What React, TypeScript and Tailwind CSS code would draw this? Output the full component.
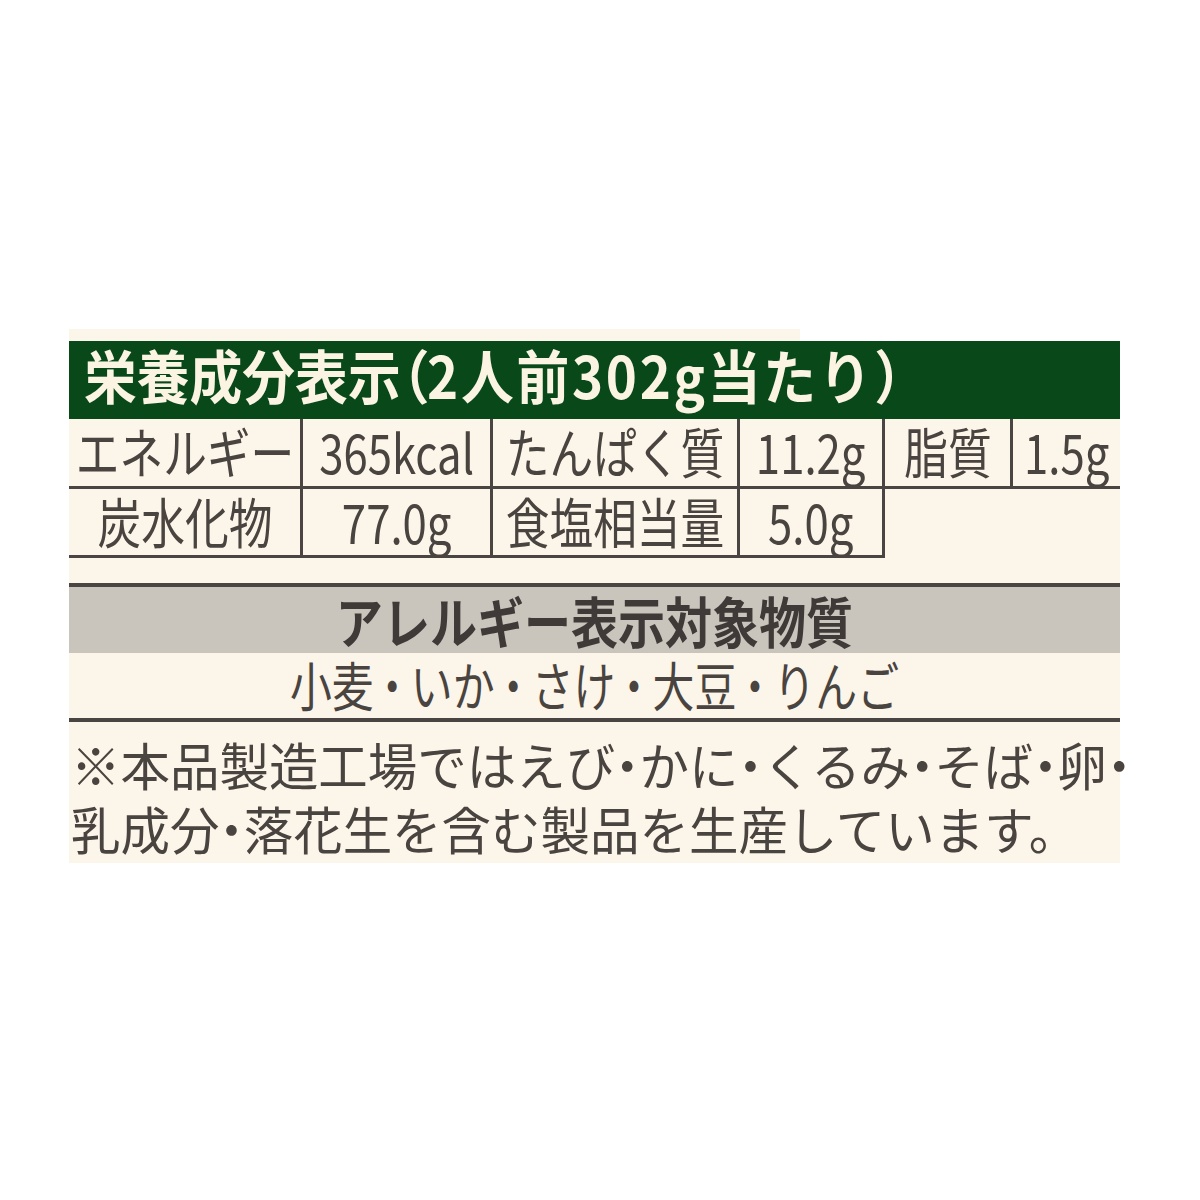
const line = "border-[#4a4542]";

type Cell = { text: string; w: string; last?: boolean };

const row1: Cell[] = [
  { text: "エネルギー", w: "w-[234px]" },
  { text: "365kcal", w: "w-[190px]" },
  { text: "たんぱく質", w: "w-[247px]" },
  { text: "11.2g", w: "w-[145px]" },
  { text: "脂質", w: "w-[128px]" },
  { text: "1.5g", w: "w-[107px]", last: true },
];

const row2: Cell[] = [
  { text: "炭水化物", w: "w-[234px]" },
  { text: "77.0g", w: "w-[190px]" },
  { text: "食塩相当量", w: "w-[247px]" },
  { text: "5.0g", w: "w-[145px]" },
];

const NutriCell = ({ cell, h }: { cell: Cell; h: string }) => (
  <div
    className={`${cell.w} ${h} ${cell.last ? "" : "border-r-[3px]"} ${line} flex justify-center pt-[5px] whitespace-nowrap`}
  >
    <span className="inline-block scale-x-[0.81] text-[54px] leading-[54px] text-[#4a4440]">
      {cell.text}
    </span>
  </div>
);

const Dot = ({ m }: { m: string }) => <span className={m}>・</span>;

export default function App() {
  return (
    <div className="min-h-[1200px] bg-white pt-[329px] pl-[69px] font-['Noto_Sans_CJK_JP','Noto_Sans',sans-serif]">
      <div className="h-[12px] w-[731px] bg-[#fcf5ea]" />
      <div className="w-[1051px] bg-[#fcf5ea]">
        {/* 栄養成分 header */}
        <div className="h-[78px] bg-[#084819] pl-[15px] pt-[4px]">
          <span className="inline-block origin-left scale-x-[0.91] whitespace-nowrap text-[58px] leading-[58px] font-bold text-[#fcf4e3]">
            栄養成分表示<span className="[font-feature-settings:'palt']">（</span>
            <span className="tracking-[3px]">2人前302g当たり）</span>
          </span>
        </div>

        <div className={`flex border-b-[3px] ${line}`}>
          {row1.map((c) => (
            <NutriCell key={c.text} cell={c} h="h-[67px]" />
          ))}
        </div>
        <div className={`flex w-[816px] border-b-[3px] ${line}`}>
          {row2.map((c) => (
            <NutriCell key={c.text} cell={c} h="h-[66px]" />
          ))}
        </div>

        {/* アレルギー */}
        <div className={`mt-[25px] border-t-[4px] ${line} h-[70px] bg-[#c9c4bc] flex justify-center pt-[5px]`}>
          <span className="inline-block scale-x-[0.855] whitespace-nowrap text-[55px] leading-[55px] font-bold text-[#3f3a37]">
            アレルギー表示対象物質
          </span>
        </div>
        <div className={`h-[69px] border-b-[4px] ${line} flex justify-center pt-[5px]`}>
          <span className="inline-block scale-x-[0.79] whitespace-nowrap text-[53px] leading-[53px] text-[#4a4440]">
            小麦<Dot m="-mx-[3px]" />いか<Dot m="-mx-[3px]" />さけ<Dot m="-mx-[3px]" />大豆<Dot m="-mx-[3px]" />りんご
          </span>
        </div>

        <div className="h-[141px] pl-[2px] pt-[10px] text-[51px] leading-[64px] text-[#4a4440]">
          <span className="block origin-left scale-x-[0.97] whitespace-nowrap">
            ※本品製造工場ではえび<Dot m="-mx-[13px]" />かに<Dot m="-mx-[13px]" />くるみ<Dot m="-mx-[13px]" />そば
            <Dot m="-mx-[13px]" />卵<Dot m="-mx-[13px]" />
          </span>
          <span className="block origin-left scale-x-[0.97] whitespace-nowrap">
            乳成分<Dot m="-mx-[13px]" />落花生を含む製品を生産しています。
          </span>
        </div>
      </div>
    </div>
  );
}
